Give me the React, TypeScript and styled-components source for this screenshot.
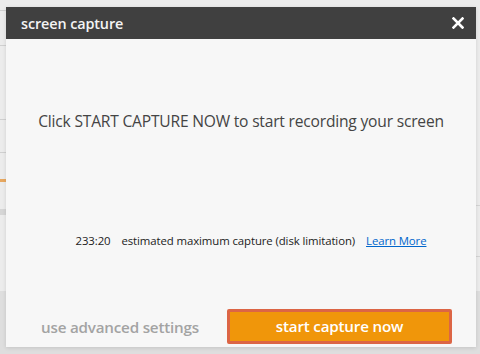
import * as React from "react";
import styled, { createGlobalStyle } from "styled-components";

const GlobalStyle = createGlobalStyle`
    html, body {
        margin: 0;
        padding: 0;
    }
    body {
        font-family: "Open Sans", "Noto Sans", sans-serif;
        background: #ececec;
    }
`;

const Backdrop = styled.div`
    position: relative;
    width: 480px;
    height: 354px;
    overflow: hidden;
    background:
        linear-gradient(#dedede, #dedede) 0 291px / 100% 63px no-repeat,
        linear-gradient(#e8a860, #e8a860) 0 179px / 6px 3px no-repeat,
        linear-gradient(#d6d6d6, #d6d6d6) 0 209px / 6px 6px no-repeat,
        linear-gradient(#d0d0d0, #d0d0d0) 0 152px / 6px 1px no-repeat,
        linear-gradient(#d0d0d0, #d0d0d0) 0 119px / 6px 1px no-repeat,
        linear-gradient(#d0d0d0, #d0d0d0) 0 45px / 6px 1px no-repeat,
        linear-gradient(#d0d0d0, #d0d0d0) 0 10px / 6px 1px no-repeat,
        linear-gradient(#d4d4d4, #d4d4d4) 476px 205px / 4px 1px no-repeat,
        linear-gradient(#d4d4d4, #d4d4d4) 476px 256px / 4px 1px no-repeat,
        #ececec;
    padding: 7px 4px 0 6px;
    box-sizing: border-box;
`;

const Dialog = styled.div`
    width: 470px;
    height: 340px;
    background: #f7f7f7;
    display: flex;
    flex-direction: column;
    box-shadow: 0 1px 4px rgba(0, 0, 0, 0.12);
`;

const Header = styled.div`
    height: 32px;
    background: #404040;
    display: flex;
    align-items: center;
    justify-content: space-between;
    padding: 0 11px 0 15px;
    flex-shrink: 0;
`;

const Title = styled.span`
    color: #f4f4f4;
    font-size: 14.4px;
    font-weight: 600;
    letter-spacing: -0.1px;
`;

const Close = styled.button`
    border: 0;
    background: none;
    padding: 0;
    width: 14px;
    height: 14px;
    display: flex;
    align-items: center;
    justify-content: center;
    cursor: pointer;
`;

const Body = styled.div`
    flex: 1;
    display: flex;
    flex-direction: column;
    align-items: center;
`;

const Lead = styled.p`
    margin: 71px 0 0;
    font-size: 15.6px;
    color: #444;
    letter-spacing: -0.2px;
`;

const Info = styled.div`
    margin-top: 101px;
    display: flex;
    align-items: center;
    font-size: 11.4px;
    color: #222;
    letter-spacing: -0.1px;
    padding-left: 20px;
`;

const Time = styled.span`
    margin-right: 11px;
`;

const LearnMore = styled.a`
    color: #0066cc;
    text-decoration: underline;
    margin-left: 11px;
    cursor: pointer;
`;

const Footer = styled.div`
    display: flex;
    align-items: center;
    padding: 0 24px 3px 35px;
    justify-content: space-between;
`;

const Advanced = styled.span`
    color: #a3a3a3;
    font-size: 15.2px;
    font-weight: 600;
    letter-spacing: -0.2px;
`;

const StartButton = styled.button`
    width: 225px;
    height: 35px;
    box-sizing: border-box;
    border: 3px solid #dc6545;
    border-radius: 2px;
    background: #f0960a;
    color: #fff;
    font-family: inherit;
    font-size: 15.2px;
    font-weight: 600;
    letter-spacing: -0.2px;
    cursor: pointer;
    padding: 0 0 1px;
`;

const App = () => (
    <>
        <GlobalStyle />
        <Backdrop>
            <Dialog>
                <Header>
                    <Title>screen capture</Title>
                    <Close aria-label="close">
                        <svg width="12" height="12" viewBox="0 0 12 12">
                            <path d="M1.5 1.5 L10.5 10.5 M10.5 1.5 L1.5 10.5" stroke="#fff" strokeWidth="2.6" strokeLinecap="square" />
                        </svg>
                    </Close>
                </Header>
                <Body>
                    <Lead>Click START CAPTURE NOW to start recording your screen</Lead>
                    <Info>
                        <Time>233:20</Time>
                        <span>estimated maximum capture (disk limitation)</span>
                        <LearnMore>Learn More</LearnMore>
                    </Info>
                </Body>
                <Footer>
                    <Advanced>use advanced settings</Advanced>
                    <StartButton>start capture now</StartButton>
                </Footer>
            </Dialog>
        </Backdrop>
    </>
);

export default App;
